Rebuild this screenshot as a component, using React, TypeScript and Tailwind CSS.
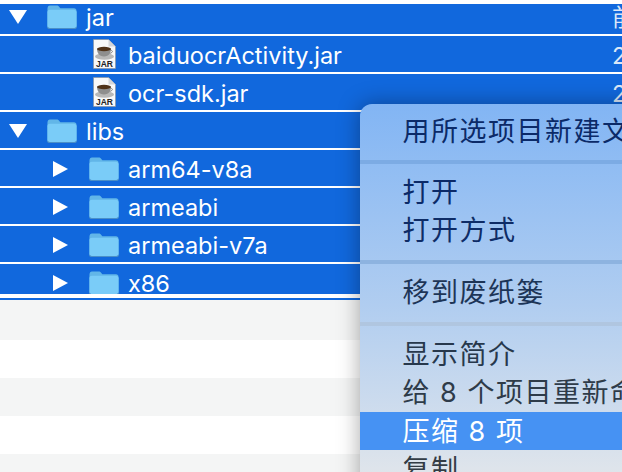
import React from "react";

const SANS = "font-['Inter','Noto_Sans_CJK_SC',sans-serif]";

function Folder() {
  return (
    <svg width="30" height="24" viewBox="1 0.5 28.5 23.5" className="shrink-0 mt-[2px]">
      <path d="M1 4.5C1 2 2 1 3.5 1h6.5c1.5 0 2 .6 2.8 1.6.6.8 1 1.2 2.2 1.2H27c1.4 0 2.5 1 2.5 2.5V21c0 1.5-1 2.5-2.5 2.5H3.5C2 23.5 1 22.5 1 21z" fill="#62b6e8" />
      <path d="M1 7.5C1 6 2 5.2 3.5 5.2H27c1.4 0 2.5.9 2.5 2.3V21c0 1.4-1 2.3-2.5 2.3H3.5C2 23.3 1 22.4 1 21z" fill="#7accf8" />
      <path d="M1 22c.3 1 1.2 1.6 2.5 1.6H27c1.3 0 2.2-.6 2.5-1.6" fill="none" stroke="#4a8fc8" strokeWidth="1" />
    </svg>
  );
}

function JarIcon() {
  return (
    <div className="relative w-[23px] h-[30px] shrink-0">
      <svg width="23" height="30" viewBox="0 0 23 30" className="absolute inset-0">
        <path d="M.5.5h15l7 7v22H.5z" fill="#f8f8f8" stroke="#8a8f96" strokeWidth=".6" />
        <path d="M15.5.5v7h7z" fill="#d4d6d9" />
        <ellipse cx="11.5" cy="17.5" rx="9.5" ry="3.2" fill="#b8b8b8" />
        <path d="M4 9.5h14c0 4-1.8 8-7 8s-7-4-7-8z" fill="#8e8e8e" />
        <ellipse cx="11" cy="10" rx="7" ry="2.2" fill="#4f3218" />
        <path d="M17.5 11.5c2.5-.5 3 2-1 3" fill="none" stroke="#888" strokeWidth="1" />
      </svg>
      <span className="absolute left-0 right-0 top-[21px] text-center text-[8.5px] leading-[9px] font-semibold text-[#222] font-['Liberation_Sans',sans-serif]">
        JAR
      </span>
    </div>
  );
}

function Arrow({ open }: { open: boolean }) {
  if (open) {
    return (
      <svg width="18" height="14" viewBox="0 0 18 14" className="block mt-[2px]">
        <path d="M0 0h18L9 14z" fill="#fff" />
      </svg>
    );
  }
  return (
    <svg width="15" height="16" viewBox="0 0 15 16" className="block mt-[2px]">
      <path d="M0 0l15 8L0 16z" fill="#fff" />
    </svg>
  );
}

type RowProps = {
  name: string;
  kind: "root" | "sub" | "file";
  date: string;
  open?: boolean;
  clip?: string;
};

function Row({ name, kind, date, open = false, clip = "h-[36px]" }: RowProps) {
  return (
    <div className={`${clip} overflow-hidden bg-[#1168dd] shrink-0`}>
      <div className="h-[36px] flex items-center text-white">
        {kind === "root" && (
          <div className="pl-[9px] w-[47px] shrink-0">
            <Arrow open={open} />
          </div>
        )}
        {kind === "sub" && (
          <div className="pl-[53px] w-[89px] shrink-0">
            <Arrow open={open} />
          </div>
        )}
        {kind === "file" ? (
          <div className="pl-[93px] pr-[12px] shrink-0">
            <JarIcon />
          </div>
        ) : (
          <div className="pr-[9px] shrink-0">
            <Folder />
          </div>
        )}
        <div className="flex-1 pt-[3px] text-[23.5px] leading-none">{name}</div>
        <div className="w-[10px] pt-[3px] shrink-0 overflow-hidden whitespace-nowrap text-[23.5px] leading-none text-[#dbe7f8]">
          {date}
        </div>
      </div>
    </div>
  );
}

function Sep({ className }: { className: string }) {
  return <div className={`h-[4px] ${className}`} />;
}

function Item({ label, className = "" }: { label: string; className?: string }) {
  return (
    <div className={`h-[38px] pl-[42.5px] pt-[1px] flex items-center whitespace-nowrap text-[27px] tracking-[1.5px] leading-none ${className}`}>
      {label}
    </div>
  );
}

export default function App() {
  return (
    <div className={`relative w-[622px] h-[472px] overflow-hidden bg-white ${SANS}`}>
      <div className="relative z-10 h-[4px] bg-white" />
      <div className="-mt-[6px] flex flex-col gap-[2px]">
        <Row name="jar" kind="root" open date="前天" />
        <Row name="baiduocrActivity.jar" kind="file" date="2018" />
        <Row name="ocr-sdk.jar" kind="file" date="2018" />
        <Row name="libs" kind="root" open date="前天" />
        <Row name="arm64-v8a" kind="sub" date="2018" />
        <Row name="armeabi" kind="sub" date="2018" />
        <Row name="armeabi-v7a" kind="sub" date="2018" />
        <Row name="x86" kind="sub" date="2018" clip="h-[30px]" />
      </div>
      <div className="h-[4px] bg-white" />
      <div className="h-[2px] bg-[#1168dd]" />
      <div className="h-[40px] bg-[#f4f5f5]" />
      <div className="h-[38px] bg-white" />
      <div className="h-[38px] bg-[#f4f5f5]" />
      <div className="h-[38px] bg-white" />
      <div className="h-[18px] bg-[#f4f5f5]" />

      {/* context menu, runs off the right and bottom of the shot */}
      <div className="absolute left-[360px] top-[104px] w-[300px] h-[400px] rounded-tl-[12px] pt-[8px] bg-gradient-to-b from-[#82b5f4] via-[#b0cdf0] via-50% to-[#e8e9ea] shadow-[0_0_22px_rgba(0,0,0,0.35)]">
        <Item label="用所选项目新建文件夹" className="text-[#0b2a68]" />
        <Sep className="mt-[10px] mb-[9px] bg-[#7cabe4]" />
        <Item label="打开" className="text-[#0b2a68]" />
        <Item label="打开方式" className="text-[#0e2c66]" />
        <Sep className="mt-[11px] mb-[9px] bg-[#8db3e0]" />
        <Item label="移到废纸篓" className="text-[#1d3557]" />
        <Sep className="mt-[11px] mb-[9px] bg-[#b0c6e0]" />
        <Item label="显示简介" className="text-[#27384c]" />
        <Item label="给 8 个项目重新命名" className="text-[#2e3b49]" />
        <Item label="压缩 8 项" className="mt-[1px] bg-[#4692f3] text-white" />
        <Item label="复制" className="text-[#333c45]" />
      </div>
    </div>
  );
}
